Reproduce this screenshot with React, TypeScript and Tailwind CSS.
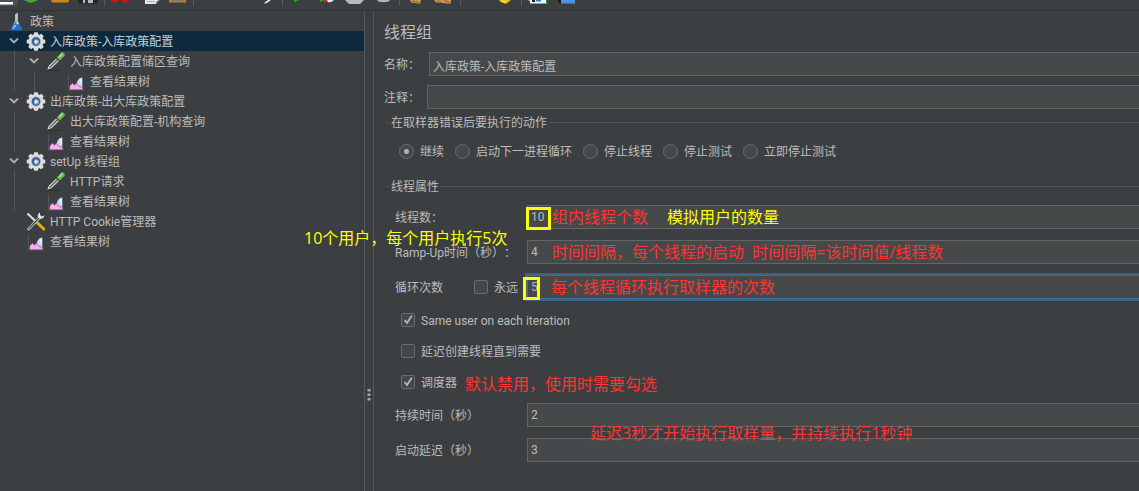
import type { ReactNode } from 'react';

type NodeIcon = 'flask' | 'gear' | 'dropper' | 'result' | 'tools';

interface TreeItem {
  label: string;
  icon: NodeIcon;
  children?: TreeItem[];
}

const resultTree: TreeItem = { label: '查看结果树', icon: 'result' };

const tree: TreeItem[] = [
  {
    label: '入库政策-入库政策配置',
    icon: 'gear',
    children: [{ label: '入库政策配置储区查询', icon: 'dropper', children: [resultTree] }],
  },
  {
    label: '出库政策-出大库政策配置',
    icon: 'gear',
    children: [{ label: '出大库政策配置-机构查询', icon: 'dropper' }, resultTree],
  },
  {
    label: 'setUp 线程组',
    icon: 'gear',
    children: [{ label: 'HTTP请求', icon: 'dropper' }, resultTree],
  },
  { label: 'HTTP Cookie管理器', icon: 'tools' },
  resultTree,
];

function TreeIcon({ name }: { name: NodeIcon }) {
  const box = 'h-5 w-5 shrink-0';
  if (name === 'flask') {
    return (
      <svg viewBox="0 0 20 20" className={box} aria-hidden="true">
        <path d="M9 3.5 11.800 1.500V10l4.200 9H4.800L9 10Z" fill="#c3ccd4" />
        <path d="M9.800 4v6.500L7.500 14h3Z" fill="#65717a" />
        <path d="M7.200 13.200h6.400l2.600 6H4.600Z" fill="#1c6fd0" />
        <path d="m8 14 2.600.1-2.700 3.800H6.400Z" fill="#8cc4f5" />
      </svg>
    );
  }
  if (name === 'gear') {
    return (
      <svg viewBox="0 0 20 20" className={box} aria-hidden="true">
        <g fill="#dcdddb">
          <circle cx="10" cy="10.500" r="7.600" />
          <rect x="7.900" y="1.200" width="4.200" height="18.600" rx="1" />
          <rect x=".7" y="8.400" width="18.600" height="4.200" rx="1" />
          <rect x="7.900" y="1.200" width="4.200" height="18.600" rx="1" transform="rotate(45 10 10.500)" />
          <rect x="7.900" y="1.200" width="4.200" height="18.600" rx="1" transform="rotate(-45 10 10.500)" />
        </g>
        <circle cx="10" cy="10.500" r="4.900" fill="#a3b4ca" />
        <circle cx="10" cy="10.500" r="4.200" fill="#34598f" />
        <circle cx="10.300" cy="11" r="2.800" fill="#7fa4cf" />
        <path d="m9 8.500 3.300 2L9 12.700Z" fill="#f3f7fb" />
      </svg>
    );
  }
  if (name === 'dropper') {
    return (
      <svg viewBox="0 0 20 20" className={box} aria-hidden="true">
        <path d="M2.500 19.400h12.500" stroke="#2e3133" strokeWidth="1" />
        <path d="m1.400 18.400 1.200-3.400 8-8 2.800 2.600-8 7.600Z" fill="#d8ddd8" />
        <path d="m3.600 16.600 7.800-7.800" stroke="#4c5552" strokeWidth="1.300" />
        <path d="m9.400 5.600 5.400 5" stroke="#2c4a26" strokeWidth="2" />
        <path d="m10.800 6.400 4.400-4.600c1.600-1.400 4.600.8 3.200 3.200l-4.500 4.500Z" fill="#69b558" />
        <path d="m13 6.200 3.400-3.600" stroke="#b2e3a2" strokeWidth="1.400" />
      </svg>
    );
  }
  if (name === 'result') {
    return (
      <svg viewBox="0 0 20 20" className={box} aria-hidden="true">
        <path d="M2.500 3.500v15.500H18" fill="none" stroke="#6b6f72" strokeWidth="1" strokeDasharray="1 1" />
        <path d="M10.500 14c.2-4 2.200-7 5.800-7.500V18Z" fill="#c2def8" />
        <path d="M13.800 8h1.800v6.800Z" fill="#f6fbff" />
        <path d="m3.800 18.600.1-3.600 2.400-2.800 2.200 2 2-2 2.200 3.100 3.700 1v2.300Z" fill="#f9b0ee" />
        <path d="m3.900 15 2.400-2.800 2.200 2 2-2 2.200 3.100 3.700 1" fill="none" stroke="#d44c98" strokeWidth=".9" />
      </svg>
    );
  }
  return (
    <svg viewBox="0 0 20 20" className={box} aria-hidden="true">
      <path d="m1.500 2.500 10.300 10" stroke="#dfe1df" strokeWidth="2" />
      <path d="m11.600 12 6.200 6" stroke="#e9a915" strokeWidth="3" strokeLinecap="round" />
      <path d="m2.600 18 11-11.400" stroke="#a3a8a6" strokeWidth="3" strokeLinecap="round" />
      <path d="m2.900 17.600 10.400-10.800" stroke="#2e3331" strokeWidth="1" />
      <path d="M14 1.400c-2.600 1.200-2.800 4.400-.8 5.800 1.900 1.300 4.900.2 5.200-2.600l-3 .9-1.400-1.700Z" fill="#e2e5e3" />
    </svg>
  );
}

function TreeRow({ item, open, selected }: { item: TreeItem; open: boolean; selected?: boolean }) {
  return (
    <div className="flex h-5 items-center">
      <span className="flex w-4 shrink-0 justify-center">
        {open && (
          <svg viewBox="0 0 10 6" className="h-1.5 w-2.5" aria-hidden="true">
            <path d="m1 .6 4 3.800L9 .6" fill="none" stroke="#adadad" strokeWidth="2" />
          </svg>
        )}
      </span>
      <span className="flex w-7 shrink-0 justify-end pr-1">
        <TreeIcon name={item.icon} />
      </span>
      <span className={selected ? 'pt-0.5 text-[#c8cdd0]' : 'pt-0.5'}>{item.label}</span>
    </div>
  );
}

function TreeBranch({ items, selectFirst }: { items: TreeItem[]; selectFirst?: boolean }) {
  return (
    <ul>
      {items.map((item, index) => {
        const selected = Boolean(selectFirst) && index === 0;
        return (
          <li key={index}>
            <div className={selected ? '-ml-1.5 bg-[#0d293e] pl-1.5' : ''}>
              <TreeRow item={item} open={Boolean(item.children)} selected={selected} />
            </div>
            {item.children && (
              <div className="ml-2 border-l border-[#55585a] pl-[11px]">
                <TreeBranch items={item.children} />
              </div>
            )}
          </li>
        );
      })}
    </ul>
  );
}

function Tool({ name, children, className = 'w-7' }: { name: string; children?: ReactNode; className?: string }) {
  return (
    <button type="button" aria-label={name} className={`h-2.5 shrink-0 ${className}`}>
      <svg viewBox="0 0 28 10" className="block h-2.5 w-7" aria-hidden="true">
        {children}
      </svg>
    </button>
  );
}

function Separator() {
  return (
    <span className="flex w-[5px] shrink-0 justify-center">
      <span className="h-1.5 w-px bg-[#5a5d5f]" />
    </span>
  );
}

function Toolbar() {
  return (
    <header className="flex h-[11px] shrink-0 items-start overflow-hidden border-b border-[#323537]">
      <span className="h-1.5 w-[18px] shrink-0 overflow-hidden rounded-br bg-[#4c5052]">
        <Tool name="新建">
          <path d="M0 0h13v2.600H0Z" fill="#fff" />
        </Tool>
      </span>
      <Tool name="模板">
        <path d="M5 0h8v3Z" fill="#2d8fd6" />
        <path d="M8 0h12l-3 1.600-5 1.400Z" fill="#3fae22" />
      </Tool>
      <Tool name="打开">
        <path d="M5 0h18v1.500l-2 1H6Z" fill="#c8881b" />
      </Tool>
      <Tool name="保存">
        <path d="M4 0h20v2l-1 1.600H5L4 2Z" fill="#232527" />
        <path d="M9 0h10v3H9Z" fill="#b9bcbe" />
        <path d="M11 0h3v3h-3Z" fill="#333" />
      </Tool>
      <Separator />
      <Tool name="剪切">
        <path d="M5.500 0c.5 1.600 5 1.600 5.700-.4M15 0c.8 1.600 5.500 1.600 6-.4" fill="none" stroke="#d11212" strokeWidth="2.600" />
      </Tool>
      <Tool name="复制">
        <path d="M10 0h15l-3 1-1 3H10Z" fill="#e8e8e6" />
        <path d="M12 1.500h8M21 3l3-2.500" stroke="#9b9b9b" strokeWidth=".8" />
      </Tool>
      <Tool name="粘贴">
        <path d="M6 0h17v2.500H6Z" fill="#c97b1c" />
        <path d="M9 0h11v1H9Z" fill="#777" />
      </Tool>
      <Separator />
      <Tool name="展开" />
      <Tool name="折叠" />
      <Tool name="切换">
        <path d="m12 3 4-3h3l-4 3-3 .5Z" fill="#e6e6e6" />
      </Tool>
      <Separator />
      <Tool name="启动">
        <path d="M9 0h5L9 2.500Z" fill="#1faa1f" />
      </Tool>
      <Tool name="不停顿开始">
        <path d="M7 0h4L7 2.500Z" fill="#1faa1f" />
        <path d="M11 0h4v2h-4Z" fill="#c92b3b" />
        <path d="M14 0h7l-3 2.200h-3Z" fill="#dbeeff" />
      </Tool>
      <Tool name="停止">
        <path d="M4 0h19l-4 4H8Z" fill="#b9b9b9" />
      </Tool>
      <Tool name="关闭">
        <path d="M8 0h13c-1 3-12 3-13 0Z" fill="#b5b5b5" />
      </Tool>
      <Separator />
      <Tool name="清除">
        <path d="m8 0 1 2.500 9 1.200L19 0Z" fill="#c89552" />
        <path d="m10 1 7 1.500" stroke="#7e5526" strokeWidth=".8" />
      </Tool>
      <Tool name="清除全部">
        <path d="m4 0 2 2.500 14 1.200L21 3V0Z" fill="#c89552" />
        <path d="m7 1 5 1.500m2-2 6 2" stroke="#7e5526" strokeWidth=".8" />
      </Tool>
      <Separator />
      <Tool name="查找" />
      <Tool name="重置搜索">
        <path d="M8 0h12l-5 3.800-5-1.600Z" fill="#e5c51c" />
        <path d="m11 .6 4 2" stroke="#fff280" strokeWidth="1" />
      </Tool>
      <Separator />
      <Tool name="函数助手">
        <path d="M4 0h19v3.500H6V1Z" fill="#f3f6f8" />
        <path d="M8 0h3v2H8Z" fill="#222" />
        <path d="M12 0h5v1.500h-5Z" fill="#287ee5" />
        <path d="M22 0h1.500v3H22Z" fill="#169b27" />
      </Tool>
      <Tool name="帮助">
        <path d="M6 0h4v3.500H7Z" fill="#15191d" />
        <path d="M9 0h14v3.500H9Z" fill="#4e91e3" />
      </Tool>
    </header>
  );
}

function Field({
  id,
  label,
  value,
  focused,
  extra,
  children,
}: {
  id: string;
  label: string;
  value: string;
  focused?: boolean;
  extra?: ReactNode;
  children?: ReactNode;
}) {
  return (
    <div className="flex h-6 items-center">
      <div className="flex w-[132px] shrink-0 items-center whitespace-nowrap">
        <label htmlFor={id} className="flex-1 pt-0.5">
          {label}
        </label>
        {extra}
      </div>
      <div className="relative min-w-0 flex-1">
        <input
          id={id}
          type="text"
          defaultValue={value}
          className={
            focused
              ? 'block h-6 w-full border border-r-0 border-[#466d94] bg-[#45494a] px-[3px] outline-2 outline-[#3d6185]'
              : 'block h-6 w-full border border-r-0 border-[#646464] bg-[#45494a] px-[3px] outline-none'
          }
        />
        {children}
      </div>
    </div>
  );
}

function Check({ id, label, checked }: { id: string; label: string; checked?: boolean }) {
  return (
    <div className="flex h-5 items-center gap-1.5">
      <span className="relative h-3.5 w-3.5">
        <input
          id={id}
          type="checkbox"
          defaultChecked={checked}
          className="peer block h-3.5 w-3.5 appearance-none rounded-xs border border-[#6b6b6b] bg-[#43494a]"
        />
        <svg
          viewBox="0 0 14 14"
          className="pointer-events-none absolute inset-0 hidden h-3.5 w-3.5 peer-checked:block"
          aria-hidden="true"
        >
          <path d="m3.500 7 2.500 3 4.800-7.300" fill="none" stroke="#b4b4b4" strokeWidth="1.900" />
        </svg>
      </span>
      <label htmlFor={id} className="pt-px">
        {label}
      </label>
    </div>
  );
}

const errorActions = ['继续', '启动下一进程循环', '停止线程', '停止测试', '立即停止测试'];

function Note({ className, children }: { className: string; children: ReactNode }) {
  return (
    <span
      className={`pointer-events-none absolute font-['Open_Sans','Noto_Sans_CJK_SC',sans-serif] text-base leading-5 whitespace-pre ${className}`}
    >
      {children}
    </span>
  );
}

export default function App() {
  return (
    <div className="flex min-h-screen flex-col overflow-hidden bg-[#3c3f41] font-[Roboto,'Noto_Sans_CJK_SC',sans-serif] text-xs leading-4 text-[#bbbbbb] [text-spacing-trim:space-all]">
      <Toolbar />
      <div className="flex flex-1">
        <nav aria-label="测试计划" className="w-[364px] shrink-0 pl-1.5 whitespace-nowrap">
          <div className="flex h-5 items-center gap-1">
            <TreeIcon name="flask" />
            <span className="pt-0.5">政策</span>
          </div>
          <TreeBranch items={tree} selectFirst />
        </nav>

        <div className="flex w-2.5 shrink-0 justify-center border-x border-[#55585a]">
          <svg viewBox="0 0 4 14" className="mt-[377px] h-3.5 w-1" aria-hidden="true">
            <path d="M.5 1h3v2.500h-3ZM.5 5.500h3V8h-3ZM.5 10h3v2.500h-3Z" fill="#a4a6a7" />
          </svg>
        </div>

        <main className="min-w-0 flex-1 pt-2.5 pl-2.5">
          <h1 className="text-base leading-6">线程组</h1>
          <div className="mt-[7px] flex h-6 items-center">
            <label htmlFor="name" className="w-[45px] shrink-0 pt-0.5">
              名称：
            </label>
            <input
              id="name"
              type="text"
              defaultValue="入库政策-入库政策配置"
              className="h-6 min-w-0 flex-1 border border-r-0 border-[#646464] bg-[#45494a] px-[3px] pt-0.5 outline-none"
            />
          </div>
          <div className="mt-[9px] flex h-6 items-center">
            <label htmlFor="comment" className="w-[43px] shrink-0 pt-0.5">
              注释：
            </label>
            <input
              id="comment"
              type="text"
              className="h-6 min-w-0 flex-1 border border-r-0 border-[#646464] bg-[#45494a] px-[3px] outline-none"
            />
          </div>

          <fieldset className="mt-[5px] ml-0.5 border-t border-[#55585a]">
            <legend className="ml-[3px] px-0.5 pt-px">在取样器错误后要执行的动作</legend>
            <div className="flex h-10 items-center gap-[11px] pl-[13px] whitespace-nowrap">
              {errorActions.map((action, index) => (
                <div key={action} className="flex items-center gap-1.5">
                  <input
                    id={`action-${index}`}
                    type="radio"
                    name="error-action"
                    defaultChecked={index === 0}
                    className="h-[15px] w-[15px] appearance-none rounded-full border border-[#6b6b6b] bg-[#43494a] bg-[radial-gradient(circle,#b4b4b4_2px,transparent_3px)] not-checked:bg-none"
                  />
                  <label htmlFor={`action-${index}`} className="pt-px">
                    {action}
                  </label>
                </div>
              ))}
            </div>
          </fieldset>

          <fieldset className="mt-[7px] ml-0.5 border-t border-[#55585a]">
            <legend className="ml-[3px] px-0.5 pt-px">线程属性</legend>
            <div className="flex flex-col gap-[11px] pt-2.5 pl-[9px]">
              <Field id="threads" label="线程数：" value="10">
                <span className="pointer-events-none absolute top-0.5 -left-px h-[23px] w-[25px] border-3 border-[#ffff00]" />
                <Note className="top-0.5 left-[25px] text-[#ff3333]">组内线程个数</Note>
                <Note className="top-0.5 left-[140px] text-[#ffff00]">模拟用户的数量</Note>
              </Field>
              <Field id="ramp-up" label="Ramp-Up时间（秒）：" value="4">
                <Note className="-top-3 -left-[223px] text-[#ffff00]">10个用户，每个用户执行5次</Note>
                <Note className="top-0.5 left-[25px] text-[#ff3333]">{'时间间隔，每个线程的启动  时间间隔=该时间值/线程数'}</Note>
              </Field>
              <Field
                id="loops"
                label="循环次数"
                value="5"
                focused
                extra={
                  <div className="pr-[9px]">
                    <Check id="forever" label="永远" />
                  </div>
                }
              >
                <span className="pointer-events-none absolute top-0.5 -left-1 h-[23px] w-[17px] border-3 border-[#ffff00]" />
                <Note className="top-0.5 left-6 text-[#ff3333]">每个线程循环执行取样器的次数</Note>
              </Field>
              <div className="flex flex-col gap-[11px] pl-1.5">
                <Check id="same-user" label="Same user on each iteration" checked />
                <Check id="delay-create" label="延迟创建线程直到需要" />
                <div className="relative">
                  <Check id="scheduler" label="调度器" checked />
                  <Note className="top-0.5 left-16 text-[#ff3333]">默认禁用，使用时需要勾选</Note>
                </div>
              </div>
              <Field id="duration" label="持续时间（秒）" value="2">
                <Note className="top-5 left-[63px] z-10 text-[#ff3333]">延迟3秒才开始执行取样量，并持续执行1秒钟</Note>
              </Field>
              <Field id="delay" label="启动延迟（秒）" value="3" />
            </div>
          </fieldset>
        </main>
      </div>
    </div>
  );
}
